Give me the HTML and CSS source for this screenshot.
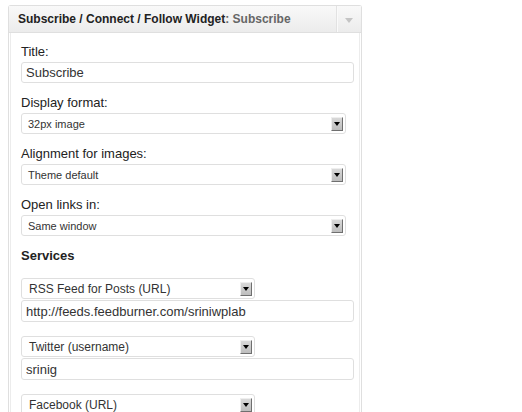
FILE: index.html
```html
<!DOCTYPE html>
<html lang="en">
<head>
  <meta charset="UTF-8">
  <meta name="viewport" content="width=device-width, initial-scale=1.0">
  <title>Subscribe Widget</title>
  <link rel="stylesheet" href="styles.css">
</head>
<body>
  <div class="widget">
    <div class="widget-top">
      <h4 class="widget-title">Subscribe / Connect / Follow Widget<span class="in-title">: Subscribe</span></h4>
      <div class="widget-toggle"><span class="arrow"></span></div>
    </div>
    <div class="widget-inside">
      <div class="field">
        <label>Title:</label>
        <input class="text" type="text" value="Subscribe">
      </div>
      <div class="field">
        <label>Display format:</label>
        <div class="select"><span>32px image</span><span class="select-btn"></span></div>
      </div>
      <div class="field">
        <label>Alignment for images:</label>
        <div class="select"><span>Theme default</span><span class="select-btn"></span></div>
      </div>
      <div class="field">
        <label>Open links in:</label>
        <div class="select"><span>Same window</span><span class="select-btn"></span></div>
      </div>

      <h5 class="services-title">Services</h5>

      <div class="service">
        <div class="select small"><span>RSS Feed for Posts (URL)</span><span class="select-btn"></span></div>
        <input class="text" type="text" value="http://feeds.feedburner.com/sriniwplab">
      </div>
      <div class="service">
        <div class="select small"><span>Twitter (username)</span><span class="select-btn"></span></div>
        <input class="text" type="text" value="srinig">
      </div>
      <div class="service">
        <div class="select small"><span>Facebook (URL)</span><span class="select-btn"></span></div>
        <input class="text" type="text" value="">
      </div>
    </div>
  </div>
</body>
</html>
```

FILE: styles.css
```css
* {margin: 0; padding: 0; box-sizing: border-box;}

body {
  margin: 5px 0 0 8px;
  font-family: "Liberation Sans", Arial, sans-serif;
  color: #333;
  background: #fff;
}

.widget {
  width: 354px;
  border: 1px solid #dfdfdf;
  border-bottom: none;
  border-radius: 3px 3px 0 0;
}

.widget-top {
  display: flex;
  align-items: center;
  height: 27px;
  background: linear-gradient(#f9f9f9, #ececec);
  border-bottom: 1px solid #dfdfdf;
}
.widget-title {
  flex: 1;
  padding-left: 9px;
  font-size: 12px;
  font-weight: bold;
  color: #222;
  white-space: nowrap;
}
.in-title {
  color: #666;
}
.widget-toggle {
  display: flex;
  align-items: center;
  justify-content: center;
  width: 25px;
  height: 100%;
  border-left: 1px solid #e2e2e2;
  box-shadow: inset 1px 0 0 #fafafa;
}
.arrow {
  width: 0;
  height: 0;
  margin-top: 2px;
  border-left: 4px solid transparent;
  border-right: 4px solid transparent;
  border-top: 5px solid #c4c4c4;
}

.widget-inside {
  margin: 0 1px;
  padding: 11px 5px 20px 10px;
  border-left: 1px solid #ececec;
  border-right: 1px solid #ececec;
}

.field {
  margin-bottom: 12px;
}
.field label {
  display: block;
  font-size: 13px;
  line-height: 16px;
  margin-bottom: 2px;
  color: #222;
}

.text {
  display: block;
  width: 333px;
  height: 21px;
  padding: 0 4px;
  border: 1px solid #dfdfdf;
  border-radius: 3px;
  font-family: inherit;
  font-size: 13px;
  color: #333;
  background: #fff;
  outline: none;
}
.service .text {
  height: 22px;
}

.select {
  display: flex;
  align-items: center;
  justify-content: space-between;
  width: 325px;
  height: 21px;
  padding: 0 2px 0 6px;
  border: 1px solid #dfdfdf;
  border-radius: 3px;
  font-size: 11px;
  color: #333;
  background: #fff;
}
.select.small {
  width: 234px;
  padding-left: 7px;
  font-size: 12px;
}
.select-btn {
  display: flex;
  align-items: center;
  justify-content: center;
  width: 12px;
  height: 14px;
  margin-top: 1px;
  background: linear-gradient(#d8d8d8, #bdbdbd);
  border-top: 1px solid #eee;
  border-left: 1px solid #eee;
  border-right: 1px solid #6f6f6f;
  border-bottom: 1px solid #6f6f6f;
}
.select-btn::after {
  content: "";
  width: 0;
  height: 0;
  border-left: 3px solid transparent;
  border-right: 3px solid transparent;
  border-top: 4px solid #000;
}

.services-title {
  font-size: 13px;
  font-weight: bold;
  line-height: 16px;
  color: #222;
  margin: 1px 0 14px;
}

.service {
  margin-bottom: 14px;
}
.service .select {
  margin-bottom: 1px;
}
```
